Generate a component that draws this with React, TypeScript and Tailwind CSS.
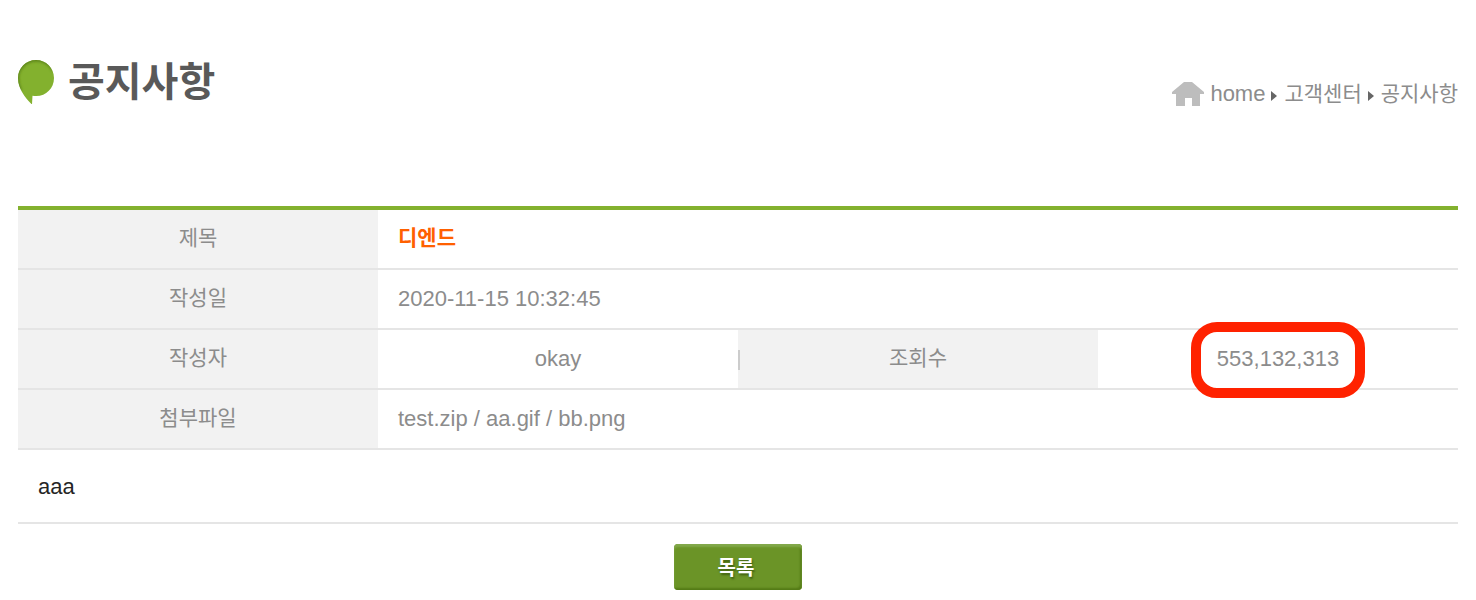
import type { ReactNode } from "react";

const label = "h-[60px] border-b-2 border-[#e5e5e5] bg-[#f2f2f2] p-0 pb-0.5 text-center text-[21px] leading-8 font-normal";
const value = "h-[60px] border-b-2 border-[#e5e5e5] px-5 py-0";

function Label({ children }: { children: ReactNode }) {
  return <th scope="row" className={label}>{children}</th>;
}

function SpeechMark() {
  return (
    <svg width="36" height="44" viewBox="0 0 36 44" aria-hidden="true" className="shrink-0">
      <defs>
        <clipPath id="mark">
          <path d="M18 0C8 0 0 8 0 18c0 6 2 10 4 14 3 5 6 9 10 12.500L14.500 35.700C26 38 36 29.500 36 18 36 8 28 0 18 0Z" />
        </clipPath>
        <filter id="soft" x="-20%" y="-20%" width="140%" height="140%">
          <feGaussianBlur stdDeviation="1.6" />
        </filter>
      </defs>
      <g clipPath="url(#mark)">
        <rect width="36" height="44" fill="#83b12e" />
        <path
          d="M36 10C32 3 26-.5 18-.5 8-.5-1 8-1 18c0 5 1 9 3 13"
          fill="none"
          stroke="#547c12"
          strokeWidth="3.500"
          filter="url(#soft)"
        />
      </g>
    </svg>
  );
}

function HomeIcon() {
  return (
    <svg width="32" height="24" viewBox="0 0 32 24" aria-hidden="true" className="shrink-0">
      <path d="M12 0h8l12 10v2h-4v12h-8v-8h-7v8H4V12H0v-2Z" fill="#bdbdbd" />
    </svg>
  );
}

function Arrow() {
  return (
    <svg width="7" height="12" viewBox="0 0 7 12" aria-hidden="true" className="mt-1 shrink-0">
      <path d="M0 1 6 6 0 11Z" fill="#666666" />
    </svg>
  );
}

export default function App() {
  return (
    <main className="bg-white px-[18px] pb-[10px] font-['Liberation_Sans','Noto_Sans_CJK_KR',sans-serif] text-[22px] leading-8 text-[#8c8c8c]">
      <header className="flex items-start justify-between pt-[52px] pb-[94px]">
        <div className="flex items-center gap-[14px]">
          <SpeechMark />
          <h1 className="text-[40px] leading-[60px] font-bold text-[#595959]">공지사항</h1>
        </div>
        <nav aria-label="Breadcrumb" className="flex items-center gap-[6px] pt-[26px]">
          <HomeIcon />
          <a href="#home">home</a>
          <Arrow />
          <a href="#support" className="text-[21px]">고객센터</a>
          <Arrow />
          <a href="#notice" className="text-[21px]">공지사항</a>
        </nav>
      </header>

      <table className="w-full table-fixed border-separate border-spacing-0 border-t-4 border-[#83b12e]">
        <tbody>
          <tr>
            <Label>제목</Label>
            <td colSpan={3} className={`${value} text-[21px] font-bold text-[#ff6000]`}>
              <div className="pb-0.5">디엔드</div>
            </td>
          </tr>
          <tr>
            <Label>작성일</Label>
            <td colSpan={3} className={value}>2020-11-15 10:32:45</td>
          </tr>
          <tr>
            <Label>작성자</Label>
            <td className={`${value} text-center`}>okay</td>
            <th scope="row" className={label}>
              <div className="relative">
                <span className="absolute top-2 left-0 h-5 w-[2px] bg-[#cccccc]" />
                조회수
              </div>
            </th>
            <td className={`${value} text-center`}>
              <span className="relative inline-block">
                553,132,313
                <span className="absolute -inset-x-[26px] -top-[21px] -bottom-[23px] rounded-[26px] border-10 border-[#ff2200]" />
              </span>
            </td>
          </tr>
          <tr>
            <Label>첨부파일</Label>
            <td colSpan={3} className={value}>
              <a href="#test.zip">test.zip</a> / <a href="#aa.gif">aa.gif</a> / <a href="#bb.png">bb.png</a>
            </td>
          </tr>
          <tr>
            <td colSpan={4} className="h-[74px] border-b-2 border-[#e5e5e5] px-5 pt-0.5 pb-0 text-[#252525]">aaa</td>
          </tr>
        </tbody>
      </table>

      <div className="flex justify-center pt-5">
        <button
          type="button"
          className="h-[46px] w-32 rounded-[4px] bg-[#6b9427] pt-0.5 pr-1 text-[20px] font-bold text-white shadow-[inset_0_3px_2px_#82a84a,inset_-2px_-2px_2px_#547b16] [text-shadow:1px_2px_2px_#3f6010]"
        >
          목록
        </button>
      </div>
    </main>
  );
}
